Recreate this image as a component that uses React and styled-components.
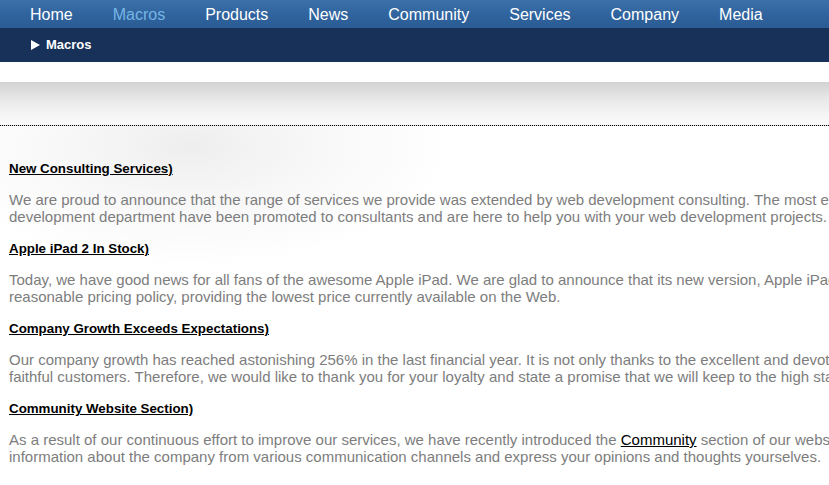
import React from 'react';
import styled, { createGlobalStyle } from 'styled-components';

const Global = createGlobalStyle`
	html, body {
		margin: 0;
		padding: 0;
		background: #ffffff;
		overflow: hidden;
		font-family: Arial, "Liberation Sans", sans-serif;
	}
`;

const Page = styled.div`
	width: 100%;
	min-height: 485px;
	display: flex;
	flex-direction: column;
`;

const NavBar = styled.ul`
	display: flex;
	margin: 0;
	padding: 2px 0 0 10px;
	box-sizing: border-box;
	height: 28px;
	list-style: none;
	background: linear-gradient(to bottom, #3b70a9 0%, #2f629c 60%, #2a5b93 100%);
`;

const NavItem = styled.li`
	display: flex;
	align-items: center;
	padding: 0 20px;
	font-size: 16px;
	color: ${props => props.active ? '#75b5e6' : '#ffffff'};
	white-space: nowrap;
	cursor: pointer;
`;

const SubBar = styled.div`
	display: flex;
	align-items: center;
	gap: 6px;
	height: 34px;
	padding: 0 0 1px 31px;
	box-sizing: border-box;
	background: #183159;
	color: #ffffff;
	font-size: 13px;
	font-weight: bold;
`;

const Arrow = styled.svg`
	display: block;
	flex: none;
`;

const Spacer = styled.div`
	height: 20px;
	background: #ffffff;
`;

const Band = styled.div`
	height: 43px;
	background: linear-gradient(to bottom, #d2d2d2 0%, #e8e8e8 40%, #f6f6f6 80%, #f9f9f9 100%);
	border-bottom: 1px dotted #000000;
`;

const Content = styled.div`
	flex: 1;
	padding: 35px 0 0 9px;
	background: radial-gradient(ellipse 260px 120px at 190px 20px, #eeeeee 0%, #f7f7f7 45%, #ffffff 100%);
`;

const Section = styled.div`
	display: flex;
	flex-direction: column;
	padding-bottom: 16px;
`;

const Heading = styled.a`
	align-self: flex-start;
	font-size: 13.33px;
	line-height: 15px;
	font-weight: bold;
	color: #000000;
	text-decoration: underline;
	margin-bottom: 15px;
`;

const Text = styled.p`
	margin: 0;
	font-size: 15px;
	line-height: 17px;
	color: #7d7d7d;
	white-space: nowrap;
`;

const Link = styled.a`
	color: #000000;
	text-decoration: underline;
`;

const menu = ['Home', 'Macros', 'Products', 'News', 'Community', 'Services', 'Company', 'Media'];

const news = [
	{
		title: 'New Consulting Services)',
		lines: [
			'We are proud to announce that the range of services we provide was extended by web development consulting. The most experienced members of our web',
			'development department have been promoted to consultants and are here to help you with your web development projects.'
		]
	},
	{
		title: 'Apple iPad 2 In Stock)',
		lines: [
			'Today, we have good news for all fans of the awesome Apple iPad. We are glad to announce that its new version, Apple iPad 2, is now in stock with a very',
			'reasonable pricing policy, providing the lowest price currently available on the Web.'
		]
	},
	{
		title: 'Company Growth Exceeds Expectations)',
		lines: [
			'Our company growth has reached astonishing 256% in the last financial year. It is not only thanks to the excellent and devoted work of our staff, but also to our',
			'faithful customers. Therefore, we would like to thank you for your loyalty and state a promise that we will keep to the high standards of our services.'
		]
	}
];

const App = () => {
	return (
		<Page>
			<Global />
			<NavBar>
				{ menu.map(item => (
					<NavItem key={ item } active={ item === 'Macros' }>{ item }</NavItem>
				)) }
			</NavBar>
			<SubBar>
				<Arrow width="9" height="10" viewBox="0 0 9 10">
					<path d="M0 0 L9 5 L0 10 Z" fill="#ffffff" />
				</Arrow>
				Macros
			</SubBar>
			<Spacer />
			<Band />
			<Content>
				{ news.map(entry => (
					<Section key={ entry.title }>
						<Heading>{ entry.title }</Heading>
						<Text>
							{ entry.lines[0] }<br />
							{ entry.lines[1] }
						</Text>
					</Section>
				)) }
				<Section>
					<Heading>Community Website Section)</Heading>
					<Text>
						As a result of our continuous effort to improve our services, we have recently introduced the <Link>Community</Link> section of our website, where you can find<br />
						information about the company from various communication channels and express your opinions and thoughts yourselves.
					</Text>
				</Section>
			</Content>
		</Page>
	);
};

export default App;
